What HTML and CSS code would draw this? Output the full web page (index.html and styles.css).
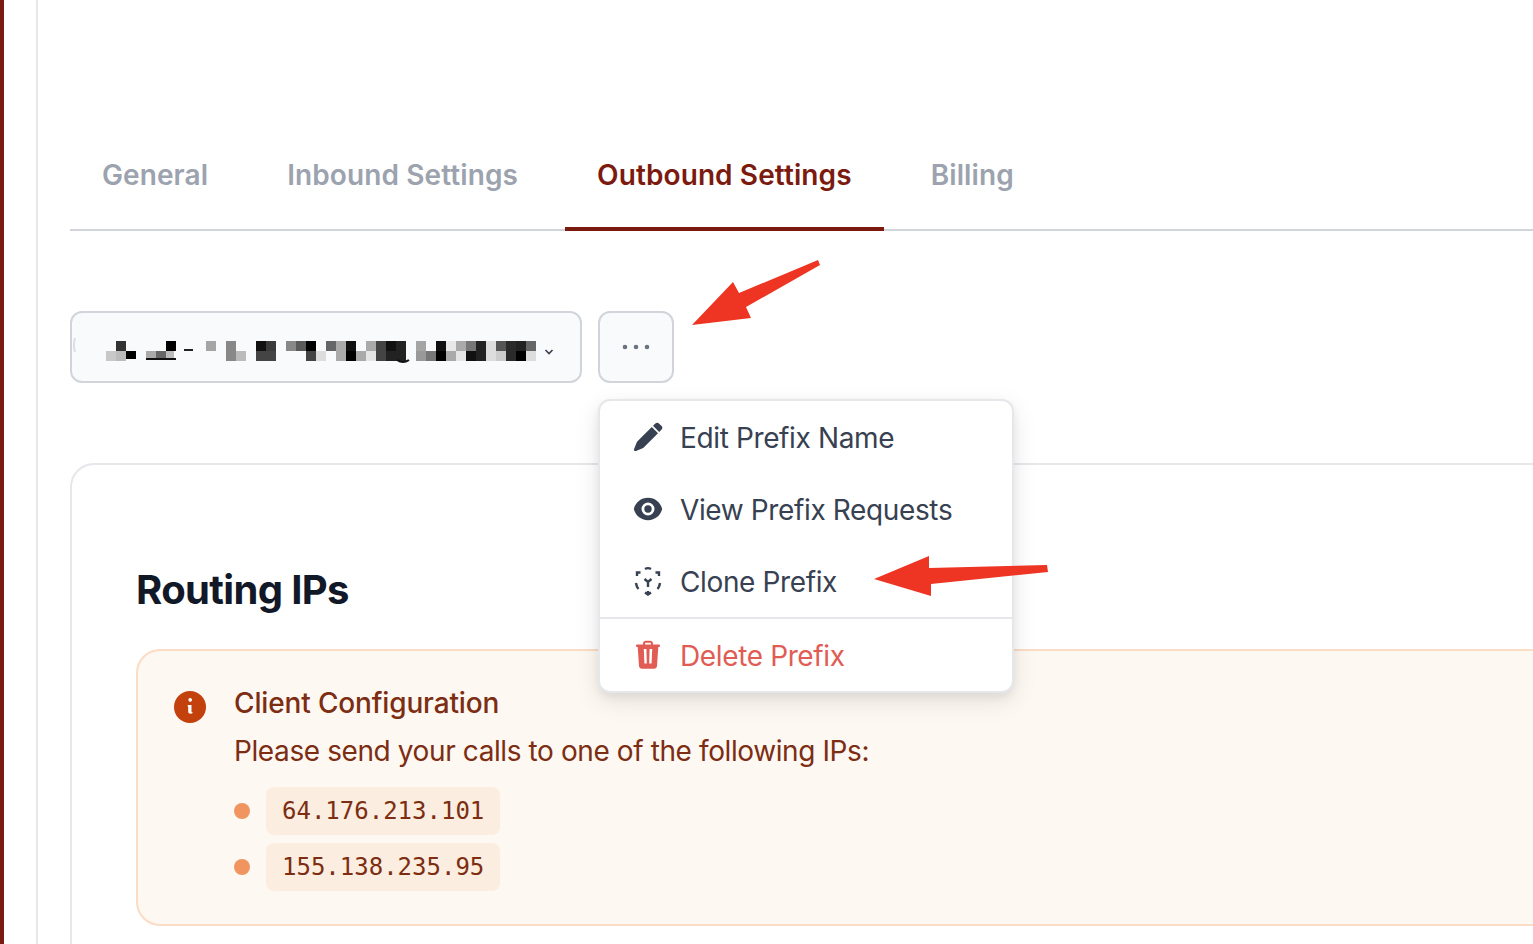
FILE: index.html
```html
<!DOCTYPE html>
<html>
	<head>
		<title>Outbound Settings</title><meta charset="utf-8">
		<link rel="stylesheet" href="styles.css">
	</head>
	<body>
		<div class="brand-bar"></div>
		<div class="side-rail"></div>
		<div class="main">
			<div class="tabs">
				<a class="tab">General</a>
				<a class="tab">Inbound Settings</a>
				<a class="tab active">Outbound Settings</a>
				<a class="tab">Billing</a>
			</div>

			<div class="toolbar">
				<div class="prefix-select">
					<!-- pixelated prefix name, as in the capture -->
					<svg class="blurred" width="440" height="26" viewBox="106 341 440 26">
						<path d="M75 338q-2 7 0 14" fill="none" stroke="#dcdee4" stroke-width="2"/>
						<g id="cells">
							<rect x="106" y="351" width="10" height="10" fill="#c8c8c8"/>
							<rect x="116" y="341" width="10" height="10" fill="#333"/>
							<rect x="116" y="351" width="10" height="10" fill="#bbb"/>
							<rect x="126" y="351" width="10" height="8" fill="#000"/>
							<rect x="146" y="351" width="10" height="8" fill="#aaa"/>
							<rect x="156" y="351" width="10" height="8" fill="#666"/>
							<rect x="166" y="341" width="10" height="10" fill="#000"/>
							<rect x="166" y="351" width="8" height="8" fill="#bbb"/>
							<rect x="146" y="358" width="30" height="2" fill="#111"/>
							<rect x="184" y="349" width="9" height="2" fill="#222"/>
							<rect x="206" y="341" width="10" height="10" fill="#a5a5a5"/>
							<rect x="226" y="341" width="10" height="20" fill="#888"/>
							<rect x="236" y="351" width="10" height="10" fill="#bbb"/>
							<rect x="256" y="341" width="10" height="10" fill="#111"/>
							<rect x="266" y="341" width="10" height="10" fill="#3a3a3a"/>
							<rect x="256" y="351" width="20" height="10" fill="#444"/>
							<rect x="286" y="341" width="10" height="10" fill="#888"/>
							<rect x="296" y="341" width="10" height="10" fill="#5a5a5a"/>
							<rect x="306" y="341" width="10" height="10" fill="#000"/>
							<rect x="306" y="351" width="10" height="10" fill="#444"/>
							<rect x="316" y="351" width="10" height="10" fill="#ddd"/>
							<rect x="326" y="341" width="10" height="10" fill="#666"/>
							<rect x="336" y="341" width="10" height="20" fill="#aaa"/>
							<rect x="346" y="341" width="10" height="10" fill="#111"/>
							<rect x="346" y="351" width="10" height="10" fill="#000"/>
							<rect x="356" y="351" width="10" height="10" fill="#aaa"/>
							<rect x="366" y="341" width="10" height="10" fill="#aaa"/>
							<rect x="366" y="351" width="10" height="10" fill="#e5e5e5"/>
							<rect x="376" y="341" width="10" height="20" fill="#444"/>
							<rect x="386" y="341" width="10" height="10" fill="#111"/>
							<rect x="386" y="351" width="10" height="10" fill="#222"/>
							<rect x="396" y="341" width="10" height="20" fill="#222"/>
							<rect x="416" y="341" width="10" height="10" fill="#a5a5a5"/>
							<rect x="416" y="351" width="10" height="10" fill="#999"/>
							<rect x="426" y="351" width="10" height="10" fill="#777"/>
							<rect x="436" y="341" width="10" height="10" fill="#111"/>
							<rect x="436" y="351" width="10" height="10" fill="#000"/>
							<rect x="446" y="341" width="10" height="10" fill="#e8e8e8"/>
							<rect x="446" y="351" width="10" height="10" fill="#aaa"/>
							<rect x="456" y="341" width="10" height="10" fill="#aaa"/>
							<rect x="456" y="351" width="10" height="10" fill="#e5e5e5"/>
							<rect x="466" y="341" width="10" height="10" fill="#777"/>
							<rect x="466" y="351" width="10" height="10" fill="#111"/>
							<rect x="476" y="341" width="10" height="20" fill="#222"/>
							<rect x="486" y="341" width="10" height="20" fill="#ddd"/>
							<rect x="496" y="341" width="10" height="10" fill="#555"/>
							<rect x="496" y="351" width="10" height="10" fill="#ccc"/>
							<rect x="506" y="341" width="10" height="20" fill="#2a2a2a"/>
							<rect x="516" y="341" width="10" height="10" fill="#222"/>
							<rect x="516" y="351" width="10" height="10" fill="#000"/>
							<rect x="526" y="341" width="10" height="10" fill="#666"/>
							<rect x="526" y="351" width="10" height="10" fill="#ddd"/>
						</g>
						<path d="M397 360q6 4 12 0" fill="none" stroke="#111" stroke-width="2"/>
					</svg>
					<svg class="chevron" width="10" height="8" viewBox="0 0 10 8"><path d="M1.500 2l3.500 3.500L8.500 2" fill="none" stroke="#374151" stroke-width="1.600"/></svg>
				</div>

				<div class="more-wrap">
					<button class="more-btn">
						<svg width="28" height="6" viewBox="0 0 28 6"><circle cx="3" cy="3" r="2.300"/><circle cx="14" cy="3" r="2.300"/><circle cx="25" cy="3" r="2.300"/></svg>
					</button>

					<div class="menu">
						<div class="menu-item">
							<svg class="ico" viewBox="0 0 32 32"><path d="M2.300 29.700c-.4-.4-.4-1-.2-1.700L5 20.800 19.800 6 26 12.200 11.200 27 4 29.900c-.7.300-1.300.2-1.700-.2z"/><path d="M21 4.800l2.400-2.400c1-1 2.500-1 3.500 0l2.700 2.700c1 1 1 2.500 0 3.500L27.200 11z"/></svg>
							<span class="label">Edit Prefix Name</span>
						</div>
						<div class="menu-item">
							<svg class="ico" viewBox="0 0 32 32"><path fill-rule="evenodd" d="M16 4.800C9 4.800 3.500 9.500 1.800 16 3.500 22.500 9 27.200 16 27.200S28.500 22.500 30.200 16C28.500 9.500 23 4.800 16 4.800zm0 17.700a6.500 6.500 0 1 1 0-13 6.500 6.500 0 0 1 0 13z"/><circle cx="16" cy="16" r="3.700"/></svg>
							<span class="label">View Prefix Requests</span>
						</div>
						<div class="menu-item">
							<svg class="ico clone" viewBox="0 0 32 32">
								<path d="M13 4q3-1.800 6 0M8.500 7.500H5V11M23.500 7.500H27V11M4 18q.5 4 2.500 6M28 18q-.5 4-2.500 6M13 27.500l3 2 3-2M16 26v4M12.500 14l3.500 3 3.500-3M16 17v5"/>
							</svg>
							<span class="label">Clone Prefix</span>
						</div>
						<div class="menu-item danger">
							<svg class="ico" viewBox="0 0 32 32"><path fill-rule="evenodd" d="M11 5.500v-1C11 3 12.300 1.800 13.800 1.800h4.400C19.700 1.800 21 3 21 4.500v1h5.800c.7 0 1.200.5 1.200 1.200S27.500 8 26.800 8h-.5L25 27c-.1 1.600-1.400 2.800-3 2.800H10c-1.600 0-2.900-1.200-3-2.800L5.700 8h-.5C4.500 8 4 7.400 4 6.700s.5-1.200 1.200-1.200zm2 0h6v-.8c0-.6-.3-.9-.9-.9h-4.200c-.6 0-.9.3-.9.900zM11.800 10h2.600l.4 14.500h-2.400zm8.400 0h-2.600l-.4 14.500h2.400z"/></svg>
							<span class="label">Delete Prefix</span>
						</div>
					</div>
				</div>
			</div>

			<div class="card">
				<h2 class="card-title">Routing IPs</h2>
				<div class="notice">
					<svg class="notice-ico" width="32" height="32" viewBox="0 0 32 32"><circle cx="16" cy="16" r="16" fill="#c2410c"/><path d="M14.500 9.500a1.800 1.800 0 1 1 3.400 0 1.800 1.800 0 0 1-3.400 0zM13.800 14h3.700v6.500c0 .6.500.8 1 .6v1.200c-1.200.6-4.300.8-4.300-1.500v-5.300h-.6z" fill="#fff"/></svg>
					<div class="notice-body">
						<div class="notice-title">Client Configuration</div>
						<div class="notice-text">Please send your calls to one of the following IPs:</div>
						<ul class="ip-list">
							<li><code>64.176.213.101</code></li>
							<li><code>155.138.235.95</code></li>
						</ul>
					</div>
				</div>
			</div>
		</div>

		<!-- annotations drawn over the capture -->
		<svg class="arrows" width="1533" height="944" viewBox="0 0 1533 944">
			<path d="M818 260l2 5-74 42 5 11-59 7 41-43 6 11z"/>
			<path d="M874 579l55-23v12l118-3 1 7-117 12v12z"/>
		</svg>
	</body>
</html>
```

FILE: styles.css
```css
* { box-sizing: border-box; }
html, body { height: 100%; }
body {
	margin: 0;
	display: flex;
	overflow: hidden;
	background: white;
	font-family: Inter, "Liberation Sans", sans-serif;
	font-size: 28px;
	color: #374151;
}

.brand-bar { width: 4px; background: #7b1b10; flex: none; }
.side-rail { width: 34px; border-right: 2px solid #e5e7eb; flex: none; }
.main {
	flex: 1;
	min-width: 0;
	display: flex;
	flex-direction: column;
	padding: 120px 0 0 32px;
}

/* tabs */
.tabs { display: flex; gap: 15px; height: 111px; flex: none; border-bottom: 2px solid #d1d5db; }
.tab {
	height: 111px;
	padding: 0 32px;
	line-height: 110px;
	font-weight: 600;
	letter-spacing: .1px;
	color: #9ca3af;
}
.tab.active { color: #7b1b10; border-bottom: 4px solid #7b1b10; }

/* select + menu */
.toolbar { display: flex; gap: 16px; margin-top: 80px; flex: none; }
.prefix-select {
	width: 512px;
	height: 72px;
	display: flex;
	align-items: flex-start;
	padding: 28px 0 0 34px;
	border: 2px solid #d1d5db;
	border-radius: 12px;
	background: #f9fafb;
}
.blurred { flex: none; overflow: visible; }
.chevron { margin: 7px 0 0 -2px; flex: none; }
.more-wrap { position: relative; }
.more-btn {
	width: 76px;
	height: 72px;
	display: flex;
	align-items: center;
	justify-content: center;
	padding: 0;
	border: 2px solid #d1d5db;
	border-radius: 12px;
	background: #f9fafb;
}
.more-btn svg { fill: #6b7280; }

.menu {
	position: absolute;
	top: 88px;
	left: 0;
	z-index: 2;
	width: 416px;
	background: white;
	border: 2px solid #e5e7eb;
	border-radius: 12px;
	box-shadow: 0 8px 24px rgba(0, 0, 0, .1), 0 4px 8px rgba(0, 0, 0, .06);
}
.menu-item {
	height: 72px;
	display: flex;
	align-items: center;
	gap: 16px;
	padding: 0 32px;
	letter-spacing: -.37px;
}
.menu-item .label { padding-top: 1px; }
.menu-item.danger { height: 74px; border-top: 2px solid #e5e7eb; color: #e05c55; }
.ico { width: 32px; height: 32px; flex: none; fill: currentColor; }
.ico.clone { fill: none; stroke: currentColor; stroke-width: 2.400; }

/* routing card, its right and bottom edges are outside the window */
.card {
	flex: 1;
	min-height: 0;
	margin-top: 80px;
	padding-left: 64px;
	border: 2px solid #e5e7eb;
	border-width: 2px 0 0 2px;
	border-radius: 24px 0 0 0;
}
.card-title {
	margin: 0;
	padding-top: 101px;
	font-size: 40px;
	line-height: 48px;
	font-weight: 700;
	letter-spacing: -.64px;
	color: #111827;
}
.notice {
	display: flex;
	gap: 28px;
	height: 277px;
	margin-top: 35px;
	padding: 40px 0 40px 36px;
	background: #fdf8f2;
	border: 2px solid #fbdcc4;
	border-right: 0;
	border-radius: 24px 0 0 24px;
	color: #7c2d12;
}
.notice-ico { flex: none; }
.notice-body { margin-top: -8px; }
.notice-title { font-weight: 500; line-height: 40px; letter-spacing: -.15px; }
.notice-text { margin-top: 8px; line-height: 40px; letter-spacing: -.4px; }
.ip-list { list-style: none; margin: 16px 0 0; padding: 0; }
.ip-list li { display: flex; align-items: center; gap: 16px; margin-bottom: 8px; }
.ip-list li::before {
	content: "";
	width: 16px;
	height: 16px;
	border-radius: 50%;
	background: #f0955f;
}
code {
	height: 48px;
	padding: 0 16px;
	border-radius: 8px;
	background: #fbeee0;
	font-family: "DejaVu Sans Mono", monospace;
	font-size: 24px;
	line-height: 48px;
}

.arrows { position: absolute; top: 0; left: 0; z-index: 3; fill: #ee3524; pointer-events: none; }
```
